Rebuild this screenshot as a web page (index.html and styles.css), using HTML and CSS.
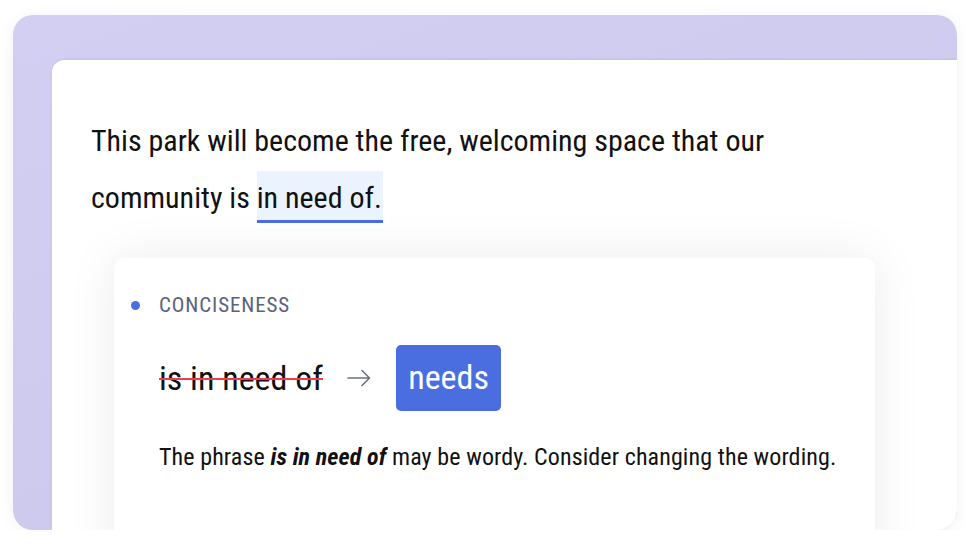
FILE: index.html
```html
<!DOCTYPE html>
<html lang="en">
<head>
    <meta charset="UTF-8">
    <title>Conciseness suggestion</title>
    <link rel="stylesheet" href="styles.css">
</head>
<body>
    <div class="frame">
        <div class="panel">
            <p class="sentence">This park will become the free, welcoming space that our<br>community is <span class="flagged">in need of.</span></p>
            <div class="card">
                <div class="category">
                    <span class="dot"></span>
                    <span>CONCISENESS</span>
                </div>
                <div class="replace">
                    <span class="old">is in need of</span>
                    <svg class="arrow" width="24" height="18" viewBox="0 0 24 18">
                        <path d="M1 9H22.5M15 1.5L22.5 9L15 16.5" fill="none" stroke="#6b7085" stroke-width="1.6" stroke-linecap="round" stroke-linejoin="round"/>
                    </svg>
                    <span class="new">needs</span>
                </div>
                <p class="explain">The phrase <b><i>is in need of</i></b> may be wordy. Consider changing the wording.</p>
            </div>
        </div>
    </div>
</body>
</html>
```

FILE: styles.css
```css
* {
    margin: 0;
    padding: 0;
    box-sizing: border-box;
}

body {
    background-color: #fff;
    font-family: Roboto, "Noto Sans", sans-serif;
    font-stretch: 75%;
    color: #111;
    padding: 15px 13px 0 13px;
}

.frame {
    width: 944px;
    height: 515px;
    background: linear-gradient(160deg, #d3cff2, #cbc7ec);
    border-radius: 20px;
    padding: 45px 0 0 39px;
    overflow: hidden;
    display: flex;
    box-shadow: 0 2px 16px rgba(0, 0, 0, 0.06);
}

.panel {
    flex-grow: 1;
    background-color: #fff;
    border-radius: 12px 0 0 0;
    padding: 52px 0 0 39px;
    box-shadow: 0 -1px 2px rgba(110, 100, 200, 0.15);
}

.sentence {
    font-size: 30px;
    line-height: 57px;
    white-space: nowrap;
}

.flagged {
    background-color: #ebf3fe;
    border-bottom: 3px solid #4a6ee0;
    padding: 9px 1px 5px 0;
}

.card {
    margin: 32px 0 0 23px;
    width: 761px;
    height: 320px;
    background-color: #fff;
    border-radius: 10px;
    box-shadow: 0 0 50px rgba(0, 0, 0, 0.08);
    padding: 35px 0 0 17px;
}

.category {
    display: flex;
    align-items: center;
    height: 24px;
    gap: 19px;
    font-size: 21px;
    letter-spacing: 0.9px;
    color: #5a6181;
}

.dot {
    width: 9px;
    height: 9px;
    border-radius: 50%;
    background-color: #4a6ee0;
}

.replace {
    display: flex;
    align-items: center;
    margin: 28px 0 0 28px;
    font-size: 34px;
}

.old {
    text-decoration: line-through;
    text-decoration-color: #ee3d4e;
    text-decoration-thickness: 2px;
}

.arrow {
    margin: 0 25px 0 24px;
}

.new {
    display: flex;
    align-items: center;
    justify-content: center;
    width: 105px;
    height: 66px;
    background-color: #4a6ee0;
    color: #fff;
    border-radius: 5px;
    padding-bottom: 2px;
}

.explain {
    margin: 31px 0 0 28px;
    font-size: 24px;
    line-height: 30px;
    letter-spacing: 0.1px;
}
```
